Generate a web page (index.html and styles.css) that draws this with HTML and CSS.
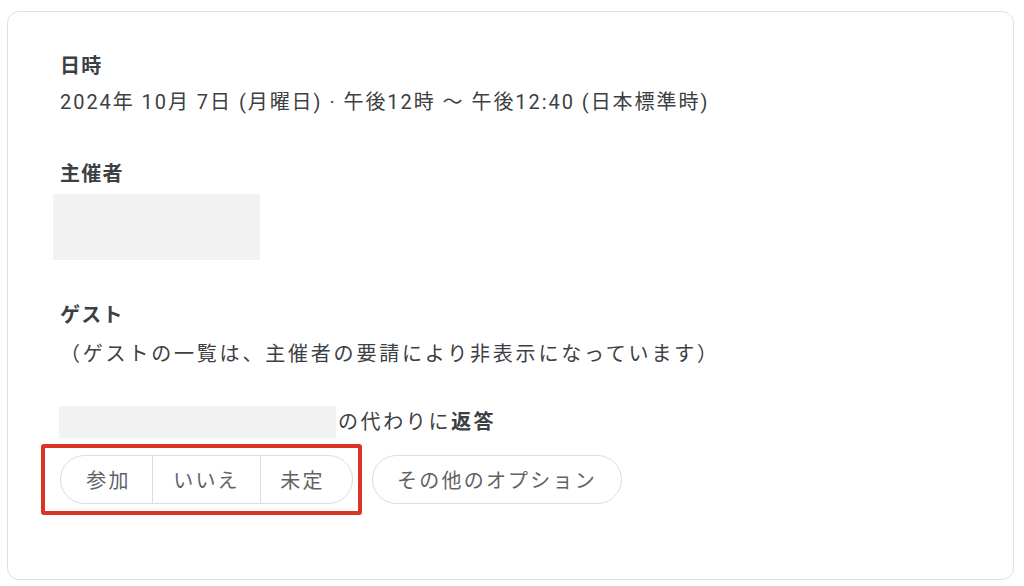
FILE: index.html
```html
<!DOCTYPE html>
<html lang="ja">
<head>
<meta charset="utf-8">
<link rel="stylesheet" href="styles.css">
</head>
<body>
<div class="card">
  <section class="block">
    <h2 class="label">日時</h2>
    <p class="text">2024年 10月 7日 (月曜日) · 午後12時 〜 午後12:40 (日本標準時)</p>
  </section>
  <section class="block block-organizer">
    <h2 class="label">主催者</h2>
    <div class="redacted redacted-organizer"></div>
  </section>
  <section class="block block-guests">
    <h2 class="label">ゲスト</h2>
    <p class="text text-guests">（ゲストの一覧は、主催者の要請により非表示になっています）</p>
  </section>
  <div class="reply-row">
    <div class="redacted redacted-name"></div>
    <span class="reply-text">の代わりに<b>返答</b></span>
  </div>
  <div class="actions">
    <div class="rsvp">
      <button class="seg seg-yes">参加</button>
      <button class="seg seg-no">いいえ</button>
      <button class="seg seg-maybe">未定</button>
    </div>
    <button class="pill">その他のオプション</button>
  </div>
</div>
</body>
</html>
```

FILE: styles.css
```css
* { box-sizing: border-box; }
html, body { margin: 0; padding: 0; background: #ffffff; }
body {
  font-family: "Roboto", "Noto Sans CJK JP", sans-serif;
  color: #3c4043;
  width: 1024px;
  height: 586px;
  overflow: hidden;
}
.card {
  margin: 11px 0 0 7px;
  width: 1007px;
  height: 569px;
  border: 1px solid #dfe0e3;
  border-radius: 12px;
  padding: 40px 0 0 52px;
}
.block { margin: 0; }
.label {
  margin: 0;
  font-size: 20px;
  line-height: 28px;
  font-weight: 700;
  letter-spacing: 1.3px;
  color: #3c4043;
}
.text {
  margin: 8px 0 0;
  font-size: 20px;
  line-height: 28px;
  letter-spacing: 1.95px;
}
.text-guests { letter-spacing: 2.8px; margin-top: 11px; }
.block-organizer { margin-top: 44px; }
.redacted { background: #f2f2f2; }
.redacted-organizer {
  width: 207px;
  height: 66px;
  margin: 6px 0 0 -7px;
}
.block-guests { margin-top: 41px; }
.reply-row {
  display: flex;
  align-items: center;
  margin-top: 38px;
  height: 32px;
}
.redacted-name { width: 277px; height: 32px; margin-left: -1px; }
.reply-text {
  font-size: 20px;
  line-height: 28px;
  letter-spacing: 2.6px;
  margin-left: 2px;
}
.reply-text b { font-weight: 700; }
.actions {
  display: flex;
  align-items: center;
  gap: 19px;
  margin-top: 17px;
}
.rsvp {
  position: relative;
  display: flex;
  height: 49px;
  border: 1px solid #dadce0;
  border-radius: 25px;
}
.rsvp::after {
  content: "";
  position: absolute;
  top: -12px;
  left: -20px;
  right: -10px;
  bottom: -12px;
  border: 4px solid #dc3327;
  border-radius: 3px;
  pointer-events: none;
}
.seg, .pill {
  font-family: "Roboto", "Noto Sans CJK JP", sans-serif;
  font-size: 20px;
  letter-spacing: 2.2px;
  color: #5f6368;
  background: transparent;
  border: 0;
  padding: 0;
  margin: 0;
  cursor: pointer;
}
.seg {
  height: 47px;
  border-left: 1px solid #dadce0;
}
.seg-yes { width: 91px; border-left: 0; padding-left: 4px; }
.seg-no { width: 108px; }
.seg-maybe { width: 92px; padding-right: 8px; }
.pill {
  height: 49px;
  width: 250px;
  border: 1px solid #dadce0;
  border-radius: 25px;
}
```
